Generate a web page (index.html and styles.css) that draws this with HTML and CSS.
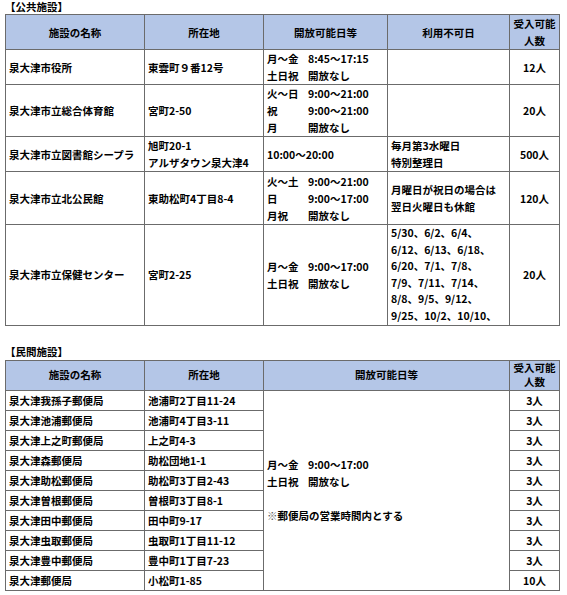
FILE: index.html
```html
<!DOCTYPE html>
<html lang="ja">
<head>
<meta charset="utf-8">
<link rel="stylesheet" href="styles.css">
</head>
<body>
<div class="page">
  <div class="title">【公共施設】</div>
  <table class="tbl pub">
    <colgroup><col class="c1"><col class="c2"><col class="c3"><col class="c4"><col class="c5"></colgroup>
    <tr class="hdr h35">
      <th>施設の名称</th><th>所在地</th><th>開放可能日等</th><th>利用不可日</th><th class="two">受入可能<br>人数</th>
    </tr>
    <tr class="r1">
      <td>泉大津市役所</td><td>東雲町９番12号</td>
      <td><span class="d">月～金</span>8:45～17:15<br><span class="d">土日祝</span>開放なし</td>
      <td></td><td class="n">12人</td>
    </tr>
    <tr class="r2">
      <td>泉大津市立総合体育館</td><td>宮町2-50</td>
      <td><span class="d">火～日</span>9:00～21:00<br><span class="d">祝</span>9:00～21:00<br><span class="d">月</span>開放なし</td>
      <td></td><td class="n">20人</td>
    </tr>
    <tr class="r3">
      <td>泉大津市立図書館シープラ</td><td>旭町20-1<br>アルザタウン泉大津4</td>
      <td>10:00～20:00</td>
      <td>毎月第3水曜日<br>特別整理日</td><td class="n">500人</td>
    </tr>
    <tr class="r4">
      <td>泉大津市立北公民館</td><td>東助松町4丁目8-4</td>
      <td><span class="d">火～土</span>9:00～21:00<br><span class="d">日</span>9:00～17:00<br><span class="d">月祝</span>開放なし</td>
      <td>月曜日が祝日の場合は<br>翌日火曜日も休館</td><td class="n">120人</td>
    </tr>
    <tr class="r5">
      <td>泉大津市立保健センター</td><td>宮町2-25</td>
      <td><span class="d">月～金</span>9:00～17:00<br><span class="d">土日祝</span>開放なし</td>
      <td class="dates">5/30、6/2、6/4、<br>6/12、6/13、6/18、<br>6/20、7/1、7/8、<br>7/9、7/11、7/14、<br>8/8、9/5、9/12、<br>9/25、10/2、10/10、</td>
      <td class="n">20人</td>
    </tr>
  </table>

  <div class="title t2">【民間施設】</div>
  <table class="tbl priv">
    <colgroup><col class="c1"><col class="c2"><col class="c34"><col class="c5"></colgroup>
    <tr class="hdr h30">
      <th>施設の名称</th><th>所在地</th><th>開放可能日等</th><th class="two2">受入可能<br>人数</th>
    </tr>
    <tr>
      <td>泉大津我孫子郵便局</td><td>池浦町2丁目11-24</td>
      <td rowspan="10" class="merged"><span class="d">月～金</span>9:00～17:00<br><span class="d">土日祝</span>開放なし<br><br><span class="note">※</span>郵便局の営業時間内とする</td>
      <td class="n">3人</td>
    </tr>
    <tr><td>泉大津池浦郵便局</td><td>池浦町4丁目3-11</td><td class="n">3人</td></tr>
    <tr><td>泉大津上之町郵便局</td><td>上之町4-3</td><td class="n">3人</td></tr>
    <tr><td>泉大津森郵便局</td><td>助松団地1-1</td><td class="n">3人</td></tr>
    <tr><td>泉大津助松郵便局</td><td>助松町3丁目2-43</td><td class="n">3人</td></tr>
    <tr><td>泉大津曽根郵便局</td><td>曽根町3丁目8-1</td><td class="n">3人</td></tr>
    <tr><td>泉大津田中郵便局</td><td>田中町9-17</td><td class="n">3人</td></tr>
    <tr><td>泉大津虫取郵便局</td><td>虫取町1丁目11-12</td><td class="n">3人</td></tr>
    <tr><td>泉大津豊中郵便局</td><td>豊中町1丁目7-23</td><td class="n">3人</td></tr>
    <tr><td>泉大津郵便局</td><td>小松町1-85</td><td class="n">10人</td></tr>
  </table>
</div>
</body>
</html>
```

FILE: styles.css
```css
html, body {
  margin: 0;
  padding: 0;
  background: #ffffff;
}
body {
  font-family: "Noto Sans CJK JP", "Noto Sans", sans-serif;
  font-size: 10.5px;
  font-weight: 700;
  color: #000;
}
.page {
  padding: 0 0 0 5px;
}
.title {
  height: 14px;
  line-height: 14px;
  padding-left: 0;
}
.t2 {
  margin-top: 18px;
  height: 16px;
  line-height: 16px;
}
.tbl {
  border-collapse: collapse;
  table-layout: fixed;
  width: 554px;
}
.c1 { width: 139px; }
.c2 { width: 119px; }
.c3 { width: 124px; }
.c4 { width: 122px; }
.c34 { width: 246px; }
.c5 { width: 50px; }
.tbl th, .tbl td {
  border: 1px solid #6b6b6b;
  padding: 0 0 0 3px;
  vertical-align: middle;
  white-space: nowrap;
  overflow: hidden;
  text-align: left;
  line-height: 17px;
}
.tbl th {
  background: #b4c6e7;
  text-align: center;
  padding: 0;
  font-weight: 700;
}
.h35 { height: 34px; }
.h30 th { line-height: 14.5px; }
.h30 { height: 29px; }
.r1 { height: 34px; }
.r2 { height: 50px; }
.r3 { height: 35px; }
.r4 { height: 53px; }
.r5 { height: 100px; }
.tbl td.dates { line-height: 16.6px; }
.priv tr { height: 20px; }
.priv tr.h30 { height: 29px; }
.priv td { line-height: 17px; }
.d {
  display: inline-block;
  width: 41px;
}
.tbl td.n {
  text-align: center;
  padding: 0;
}
.merged {
  line-height: 17px;
}
.note {
  font-weight: 400;
  color: #555;
}
```
